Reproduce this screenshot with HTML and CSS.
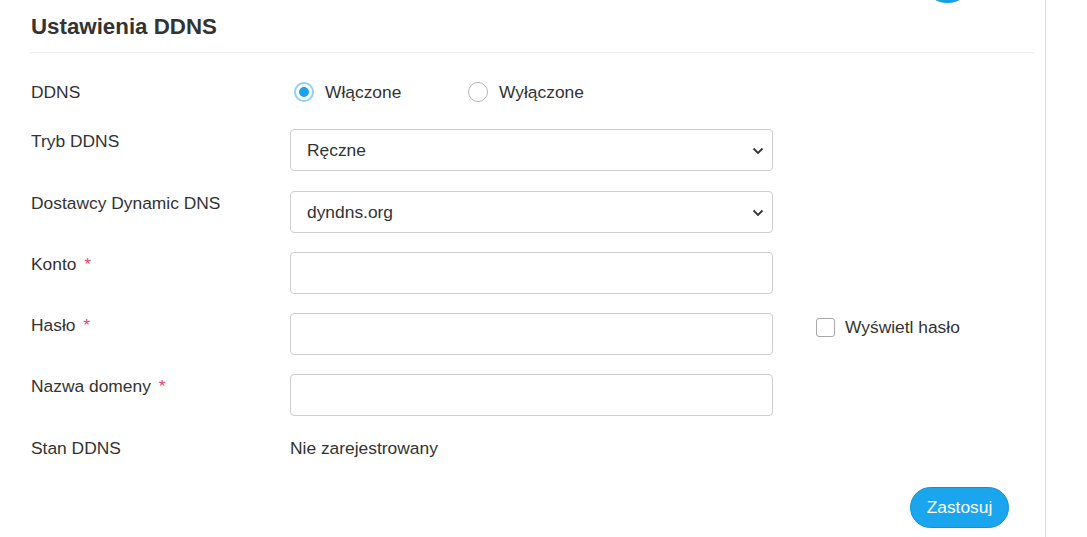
FILE: index.html
```html
<!DOCTYPE html>
<html lang="pl">
<head>
<meta charset="utf-8">
<title>Ustawienia DDNS</title>
<link rel="stylesheet" href="styles.css">
</head>
<body>
<div class="page">
  <div class="main">
    <div class="blob"></div>
    <div class="panel">
      <div class="header"><h1 class="title">Ustawienia DDNS</h1></div>
      <form class="form">
        <div class="row row-radio">
          <div class="label">DDNS</div>
          <div class="control radios">
            <label class="radio"><input type="radio" name="ddns" checked><span>Włączone</span></label>
            <label class="radio"><input type="radio" name="ddns"><span>Wyłączone</span></label>
          </div>
        </div>
        <div class="row">
          <div class="label">Tryb DDNS</div>
          <div class="control select-wrap">
            <select class="field select"><option>Ręczne</option></select>
            <svg class="chev" width="12" height="8" viewBox="0 0 12 8"><path d="M1.5 1.5 6 6l4.5-4.5" fill="none" stroke="#333" stroke-width="1.8"/></svg>
          </div>
        </div>
        <div class="row">
          <div class="label">Dostawcy Dynamic DNS</div>
          <div class="control select-wrap">
            <select class="field select"><option>dyndns.org</option></select>
            <svg class="chev" width="12" height="8" viewBox="0 0 12 8"><path d="M1.5 1.5 6 6l4.5-4.5" fill="none" stroke="#333" stroke-width="1.8"/></svg>
          </div>
        </div>
        <div class="row">
          <div class="label">Konto <span class="req">*</span></div>
          <div class="control"><input class="field" type="text"></div>
        </div>
        <div class="row">
          <div class="label">Hasło <span class="req">*</span></div>
          <div class="control"><input class="field" type="password"></div>
          <label class="check"><input type="checkbox"><span>Wyświetl hasło</span></label>
        </div>
        <div class="row">
          <div class="label">Nazwa domeny <span class="req">*</span></div>
          <div class="control"><input class="field" type="text"></div>
        </div>
        <div class="row row-status">
          <div class="label">Stan DDNS</div>
          <div class="value">Nie zarejestrowany</div>
        </div>
        <div class="actions"><button type="button" class="btn">Zastosuj</button></div>
      </form>
    </div>
  </div>
</div>
</body>
</html>
```

FILE: styles.css
```css
* { box-sizing: border-box; }
html, body { margin: 0; padding: 0; background: #fff; }
body {
  font-family: "Liberation Sans", Arial, sans-serif;
  font-size: 17.4px;
  color: #333;
}
.page { display: flex; min-height: 537px; }
.main {
  position: relative;
  width: 1046px;
  border-right: 1px solid #dcdcdc;
  min-height: 537px;
}
.blob {
  position: absolute;
  left: 924px;
  top: -39px;
  width: 47px;
  height: 42px;
  border-radius: 50%;
  background: #1a9fe3;
}
.panel { padding: 0 11px 0 30px; }
.header {
  height: 53px;
  border-bottom: 1px solid #ebebeb;
  display: flex;
  align-items: center;
  padding-left: 1px;
}
.title {
  margin: 0;
  font-size: 22.3px;
  font-weight: bold;
  color: #333;
  line-height: 26px;
  position: relative;
  top: 1px;
}
.form {
  display: flex;
  flex-direction: column;
  gap: 19.25px;
  margin-top: 21px;
}
.row {
  display: flex;
  align-items: flex-start;
  min-height: 42px;
}
.row-radio { min-height: 36px; align-items: center; }
.label {
  width: 260px;
  padding-left: 1px;
  padding-top: 2px;
  line-height: 20px;
  flex: none;
}
.row-radio .label { padding-top: 0; }
.req { color: #e8456b; margin-left: 3px; }
.control { width: 483px; flex: none; position: relative; }
.radios { display: flex; align-items: center; padding-left: 4px; }
.radio {
  display: flex;
  align-items: center;
  width: 174px;
  cursor: pointer;
}
.radio input {
  appearance: none;
  -webkit-appearance: none;
  margin: 0 11px 0 0;
  width: 20px;
  height: 20px;
  border-radius: 50%;
  border: 1px solid #b5b5b5;
  background: #fff;
  display: grid;
  place-items: center;
}
.radio input:checked { border: 2px solid #8fd0f4; }
.radio input:checked::after {
  content: "";
  width: 10px;
  height: 10px;
  border-radius: 50%;
  background: #1aa3eb;
}
.field {
  display: block;
  width: 483px;
  height: 42px;
  border: 1px solid #cfcfcf;
  border-radius: 4px;
  padding: 0 16px;
  font: inherit;
  color: #333;
  background: #fff;
  outline: none;
}
.select { appearance: none; -webkit-appearance: none; }
.chev {
  position: absolute;
  right: 9px;
  top: 18px;
  pointer-events: none;
}
.check {
  display: flex;
  align-items: center;
  margin-left: 43px;
  padding-top: 4px;
  line-height: 20px;
  cursor: pointer;
}
.check input {
  appearance: none;
  -webkit-appearance: none;
  margin: 0 10px 0 0;
  width: 19px;
  height: 19px;
  border: 1px solid #a8a8a8;
  border-radius: 3px;
  background: #fff;
}
.row-status { min-height: 26px; }
.value { padding-top: 2px; line-height: 20px; }
.actions {
  display: flex;
  justify-content: flex-end;
  padding-right: 25px;
  margin-top: 6px;
}
.btn {
  width: 99px;
  height: 41px;
  border-radius: 21px;
  border: 1px solid #1890d0;
  background: #1aa6ee;
  color: #fff;
  font: inherit;
  font-size: 17.4px;
  cursor: pointer;
}
```
